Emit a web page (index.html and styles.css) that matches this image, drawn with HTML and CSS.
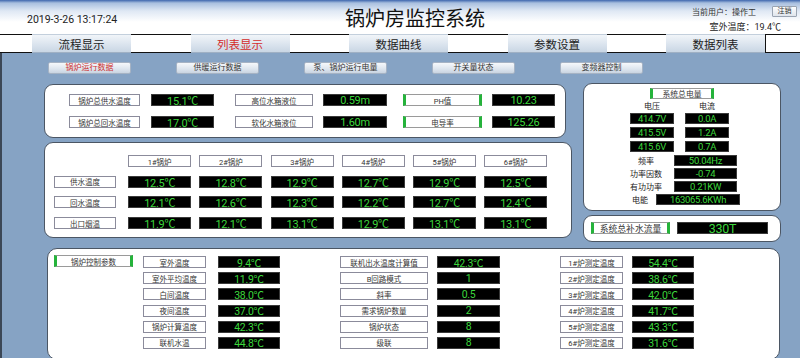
FILE: index.html
```html
<!DOCTYPE html>
<html lang="zh-CN">
<head>
    <meta charset="UTF-8">
    <meta name="viewport" content="width=device-width, initial-scale=1.0">
    <title>锅炉房监控系统</title>
    <link rel="stylesheet" href="styles.css">
</head>
<body>
    <div class="header">
        <div class="date">2019-3-26 13:17:24</div>
        <div class="title">锅炉房监控系统</div>
        <div class="user">
            <div class="user-line">当前用户：操作工<button class="logout">注销</button></div>
            <div class="outdoor">室外温度：19.4℃</div>
        </div>
    </div>

    <div class="tabs">
        <div class="gap first"></div>
        <div class="tab">流程显示</div>
        <div class="gap"></div>
        <div class="tab active">列表显示</div>
        <div class="gap"></div>
        <div class="tab">数据曲线</div>
        <div class="gap"></div>
        <div class="tab">参数设置</div>
        <div class="gap"></div>
        <div class="tab">数据列表</div>
        <div class="gap last"></div>
    </div>

    <div class="main">
        <div class="subnav">
            <button class="sub active">锅炉运行数据</button>
            <button class="sub">供暖运行数据</button>
            <button class="sub">泵、锅炉运行电量</button>
            <button class="sub">开关量状态</button>
            <button class="sub">变频器控制</button>
        </div>

        <div class="upper">
            <div class="left-col">
                <div class="panel totals">
                    <div class="row">
                        <div class="lbl">锅炉总供水温度</div>
                        <div class="val">15.1℃</div>
                        <div class="lbl">高位水箱液位</div>
                        <div class="val">0.59m</div>
                        <div class="lbl mark">PH值</div>
                        <div class="val">10.23</div>
                    </div>
                    <div class="row">
                        <div class="lbl">锅炉总回水温度</div>
                        <div class="val">17.0℃</div>
                        <div class="lbl">软化水箱液位</div>
                        <div class="val">1.60m</div>
                        <div class="lbl mark">电导率</div>
                        <div class="val">125.26</div>
                    </div>
                </div>

                <div class="panel boilers">
                    <div></div>
                    <div class="lbl">1#锅炉</div>
                    <div class="lbl">2#锅炉</div>
                    <div class="lbl">3#锅炉</div>
                    <div class="lbl">4#锅炉</div>
                    <div class="lbl">5#锅炉</div>
                    <div class="lbl">6#锅炉</div>

                    <div class="lbl side">供水温度</div>
                    <div class="val">12.5℃</div>
                    <div class="val">12.8℃</div>
                    <div class="val">12.9℃</div>
                    <div class="val">12.7℃</div>
                    <div class="val">12.9℃</div>
                    <div class="val">12.5℃</div>

                    <div class="lbl side">回水温度</div>
                    <div class="val">12.1℃</div>
                    <div class="val">12.6℃</div>
                    <div class="val">12.3℃</div>
                    <div class="val">12.2℃</div>
                    <div class="val">12.7℃</div>
                    <div class="val">12.4℃</div>

                    <div class="lbl side">出口烟温</div>
                    <div class="val">11.9℃</div>
                    <div class="val">12.1℃</div>
                    <div class="val">13.1℃</div>
                    <div class="val">12.9℃</div>
                    <div class="val">13.1℃</div>
                    <div class="val">13.1℃</div>
                </div>
            </div>

            <div class="right-col">
                <div class="panel power">
                    <div class="lbl mark power-title">系统总电量</div>
                    <div class="phase-head">
                        <span>电压</span>
                        <span>电流</span>
                    </div>
                    <div class="phases">
                        <div class="val">414.7V</div>
                        <div class="val">0.0A</div>
                        <div class="val">415.5V</div>
                        <div class="val">1.2A</div>
                        <div class="val">415.6V</div>
                        <div class="val">0.7A</div>
                    </div>
                    <div class="metrics">
                        <div class="metric">
                            <span class="name">频率</span>
                            <div class="val">50.04Hz</div>
                        </div>
                        <div class="metric">
                            <span class="name">功率因数</span>
                            <div class="val">-0.74</div>
                        </div>
                        <div class="metric">
                            <span class="name">有功功率</span>
                            <div class="val">0.21KW</div>
                        </div>
                        <div class="metric energy">
                            <span class="name">电能</span>
                            <div class="val">163065.6KWh</div>
                        </div>
                    </div>
                </div>

                <div class="panel refill">
                    <div class="lbl mark">系统总补水流量</div>
                    <div class="val">330T</div>
                </div>
            </div>
        </div>

        <div class="panel control">
            <div class="lbl mark">锅炉控制参数</div>

            <div class="group g1">
                <div class="row"><div class="lbl">室外温度</div><div class="val">9.4℃</div></div>
                <div class="row"><div class="lbl">室外平均温度</div><div class="val">11.9℃</div></div>
                <div class="row"><div class="lbl">白间温度</div><div class="val">38.0℃</div></div>
                <div class="row"><div class="lbl">夜间温度</div><div class="val">37.0℃</div></div>
                <div class="row"><div class="lbl">锅炉计算温度</div><div class="val">42.3℃</div></div>
                <div class="row"><div class="lbl">联机水温</div><div class="val">44.8℃</div></div>
            </div>

            <div class="group g2">
                <div class="row"><div class="lbl">联机出水温度计算值</div><div class="val">42.3℃</div></div>
                <div class="row"><div class="lbl">B回路模式</div><div class="val">1</div></div>
                <div class="row"><div class="lbl">斜率</div><div class="val">0.5</div></div>
                <div class="row"><div class="lbl">需求锅炉数量</div><div class="val">2</div></div>
                <div class="row"><div class="lbl">锅炉状态</div><div class="val">8</div></div>
                <div class="row"><div class="lbl">级联</div><div class="val">8</div></div>
            </div>

            <div class="group g3">
                <div class="row"><div class="lbl">1#炉测定温度</div><div class="val">54.4℃</div></div>
                <div class="row"><div class="lbl">2#炉测定温度</div><div class="val">38.6℃</div></div>
                <div class="row"><div class="lbl">3#炉测定温度</div><div class="val">42.0℃</div></div>
                <div class="row"><div class="lbl">4#炉测定温度</div><div class="val">41.7℃</div></div>
                <div class="row"><div class="lbl">5#炉测定温度</div><div class="val">43.3℃</div></div>
                <div class="row"><div class="lbl">6#炉测定温度</div><div class="val">31.6℃</div></div>
            </div>
        </div>
    </div>
</body>
</html>
```

FILE: styles.css
```css
* {
    box-sizing: border-box;
}

body {
    margin: 0;
    width: 800px;
    height: 358px;
    overflow: hidden;
    background: #86a3c4;
    font-family: Roboto, "Noto Sans CJK SC", sans-serif;
    color: #222;
}

/* header */

.header {
    height: 34px;
    display: flex;
    background: linear-gradient(#3e66ad 0, #a8bfdf 3px, #dfe8f4 11px, #fff 22px);
}

.date {
    flex: none;
    width: 345px;
    padding: 13px 0 0 27px;
    font-size: 10.5px;
    line-height: 14px;
}

.title {
    padding-top: 4px;
    font-size: 20px;
    line-height: 30px;
    color: #111;
}

.user {
    margin-left: auto;
    padding: 6px 3px 0 0;
    display: flex;
    flex-direction: column;
    align-items: flex-end;
}

.user-line {
    display: flex;
    align-items: center;
    font-size: 8px;
    color: #333;
}

.logout {
    margin-left: 16px;
    width: 25px;
    height: 11px;
    padding: 0;
    font-family: inherit;
    font-size: 7px;
    line-height: 9px;
    color: #333;
    background: linear-gradient(#fdfdfe, #dfe5ec);
    border: 1px solid #9aa4b2;
    border-radius: 1px;
}

.outdoor {
    margin: 5px 16px 0 0;
    font-size: 9px;
    line-height: 11px;
    color: #222;
}

/* tabs */

.tabs {
    display: flex;
    height: 19px;
}

.gap {
    width: 59.5px;
    background: #fff;
    border-top: 1px solid #111;
    border-bottom: 1px solid #111;
}

.gap.first {
    width: 32px;
}

.gap.last {
    flex: 1;
    width: auto;
    border-left: 1px solid #111;
}

.tab {
    width: 99px;
    display: flex;
    align-items: center;
    justify-content: center;
    font-size: 11.5px;
    color: #222;
    background: linear-gradient(#f1f5f9, #dbe4ee 55%, #c9d6e4);
    border-top: 1px solid #c3cfdc;
    border-bottom: 1px solid #9fb0c4;
}

.tab.active {
    color: #d42b2b;
}

/* main area */

.main {
    border-left: 2px solid #3b4756;
    height: 305px;
}

.subnav {
    display: flex;
    gap: 45px;
    padding: 9px 0 0 46px;
    height: 30px;
}

.sub {
    width: 83px;
    height: 12px;
    padding: 0;
    font-family: inherit;
    font-size: 8px;
    line-height: 10px;
    color: #333;
    background: linear-gradient(#f6f8fb, #dde5ee 60%, #c9d4e1);
    border: 1px solid #a6b3c4;
    border-radius: 2px;
}

.sub.active {
    color: #cc2f2f;
}

.upper {
    display: flex;
    align-items: flex-start;
    padding-left: 42px;
}

.left-col {
    width: 528px;
    margin-top: 1px;
    display: flex;
    flex-direction: column;
    gap: 4px;
}

.right-col {
    width: 198px;
    margin-left: 11px;
    display: flex;
    flex-direction: column;
    gap: 4px;
}

.panel {
    background: #fff;
    border: 1px solid #4b5664;
    border-radius: 9px;
}

/* shared boxes */

.lbl {
    height: 12px;
    display: flex;
    align-items: center;
    justify-content: center;
    font-size: 7.5px;
    color: #333;
    background: #fff;
    border: 1px solid #8b8b9b;
    white-space: nowrap;
}

.lbl.mark {
    border-left: 3px solid #25b33b;
    border-right: 3px solid #25b33b;
    border-top-color: #9a9a9a;
    border-bottom-color: #9a9a9a;
}

.val {
    height: 12px;
    display: flex;
    align-items: center;
    justify-content: center;
    font-size: 11px;
    letter-spacing: -0.3px;
    color: #3cd63c;
    background: #000;
    border: 1px solid #3a3a3a;
    white-space: nowrap;
}

/* totals */

.totals {
    width: 522px;
    height: 54px;
    padding: 9px 0 0 24px;
}

.totals .row {
    display: flex;
}

.totals .row + .row {
    margin-top: 10px;
}

.totals .lbl:nth-child(1) { width: 71px; }
.totals .val:nth-child(2) { width: 63px; margin-left: 11px; }
.totals .lbl:nth-child(3) { width: 78px; margin-left: 21px; }
.totals .val:nth-child(4) { width: 64px; margin-left: 10px; }
.totals .lbl:nth-child(5) { width: 79px; margin-left: 16px; }
.totals .val:nth-child(6) { width: 63px; margin-left: 10px; }

/* boilers */

.boilers {
    height: 96px;
    padding: 12px 0 0 9px;
    display: grid;
    grid-template-columns: 66px repeat(6, 63px);
    grid-auto-rows: 12px;
    column-gap: 8.2px;
    row-gap: 8.7px;
    align-content: start;
}

.boilers .side {
    width: 62px;
}

/* power */

.power {
    height: 128px;
    padding-top: 4px;
}

.power-title {
    width: 64px;
    height: 11px;
    margin: 0 auto;
    font-size: 7.8px;
}

.phase-head {
    display: flex;
    gap: 11px;
    margin: 2px 0 0 46px;
    height: 12px;
}

.phase-head span {
    width: 44px;
    text-align: center;
    font-size: 8px;
    line-height: 12px;
    color: #222;
}

.phases {
    display: grid;
    grid-template-columns: 44px 44px;
    grid-auto-rows: 11px;
    column-gap: 11px;
    row-gap: 3px;
    margin-left: 46px;
}

.phases .val,
.metric .val {
    height: 11px;
    font-size: 9.5px;
}

.metrics {
    margin-top: 3px;
    display: flex;
    flex-direction: column;
    gap: 2px;
}

.metric {
    display: flex;
    align-items: center;
}

.metric .name {
    width: 56px;
    margin-left: 34px;
    text-align: center;
    font-size: 8px;
    color: #222;
}

.metric .val {
    width: 63px;
}

.metric.energy .name {
    width: 32px;
    margin-left: 40px;
}

.metric.energy .val {
    width: 84px;
}

/* refill */

.refill {
    height: 27px;
    padding: 6px 0 0 7px;
    display: flex;
    align-items: flex-start;
}

.refill .lbl {
    width: 79px;
    font-size: 8.8px;
}

.refill .val {
    width: 91px;
    margin-left: 7px;
    font-size: 12.5px;
}

/* control */

.control {
    width: 733px;
    height: 112px;
    margin: 6px 0 0 45px;
    padding: 6px 0 0 6px;
    border-radius: 10px;
    display: flex;
    align-items: flex-start;
}

.control > .lbl {
    width: 79px;
}

.group {
    margin-top: 1px;
    display: flex;
    flex-direction: column;
    gap: 4.2px;
}

.group .row {
    display: flex;
}

.group .val {
    font-size: 10.5px;
}

.g1 { margin-left: 10px; }
.g1 .lbl { width: 63px; }
.g1 .val { width: 62px; margin-left: 12px; }

.g2 { margin-left: 60px; }
.g2 .lbl { width: 88px; }
.g2 .val { width: 63px; margin-left: 9px; }

.g3 { margin-left: 60px; }
.g3 .lbl { width: 63px; }
.g3 .val { width: 62px; margin-left: 9px; }
```
